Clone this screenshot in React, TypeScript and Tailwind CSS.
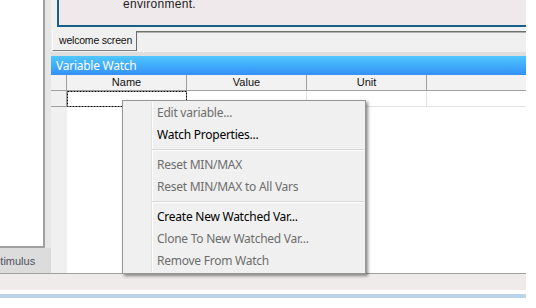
import React from "react";

const MenuItem = ({ label, disabled }: { label: string; disabled?: boolean }) => (
  <div
    className={`h-[22px] flex items-center pl-[34px] text-[12px] leading-none tracking-[-0.25px] ${
      disabled ? "text-[#6d6d6d]" : "text-[#000000]"
    }`}
  >
    {label}
  </div>
);

const Separator = () => (
  <div className="h-[8px] flex flex-col justify-center pl-[29px] pr-[1px]">
    <div className="h-[1px] bg-[#d7d7d7]" />
    <div className="h-[1px] bg-white" />
  </div>
);

export default function App() {
  return (
    <div className="w-[536px] h-[308px] bg-white relative overflow-hidden font-['Noto_Sans',sans-serif]">
      <div className="w-[526px] flex flex-col">
        <div className="flex h-[273px]">
          {/* left panel */}
          <div className="w-[51px] flex flex-col bg-[#e6e6e6]">
            <div className="h-[248px] w-[45px] bg-white border-r-2 border-b-2 border-[#a0a0a0]" />
            <div className="flex-1 bg-[#dcdcdc] overflow-hidden">
              <div className="ml-[-7px] mt-[6px] text-[11px] leading-[14px] text-[#50505e] font-['Liberation_Sans',sans-serif] whitespace-nowrap">
                Stimulus
              </div>
            </div>
          </div>
          {/* right area */}
          <div className="flex-1 flex flex-col bg-[#f0f0f0]">
            <div className="h-[27px] pl-[6px]">
              <div className="h-[27px] bg-[#efe9ec] border-l-2 border-b-2 border-[#17608c] overflow-hidden">
                <div className="pl-[64px] mt-[-2px] text-[12px] leading-[12px] text-[#1e1e1e] font-['Liberation_Sans',sans-serif] tracking-[0.3px]">
                  environment.
                </div>
              </div>
            </div>
            <div className="h-[4px]" />
            {/* tab strip */}
            <div className="h-[21px] flex">
              <div className="w-[1px]" />
              <div className="w-[85px] h-[20px] border-l border-white border-r border-b border-r-[#696969] border-b-[#808080] flex items-center pl-[6px] text-[10.5px] tracking-[-0.2px] text-[#111] font-['Liberation_Sans',sans-serif] whitespace-nowrap">
                welcome screen
              </div>
              <div className="flex-1 flex flex-col">
                <div className="h-[1px] bg-[#707070]" />
                <div className="h-[1px] bg-[#b0b0b0]" />
              </div>
            </div>
            <div className="h-[4px] bg-[#dedede]" />
            {/* Variable Watch */}
            <div className="h-[19px] bg-linear-to-b from-[#50c7ff] to-[#3590f5] flex items-center pl-[5px] text-white text-[12px] leading-none tracking-[-0.25px]">
              Variable Watch
            </div>
            {/* grid */}
            <div className="flex-1 flex flex-col bg-white font-['Liberation_Sans',sans-serif] text-[11px]">
              <div className="h-[16px] flex border-b border-[#a0a0a0] bg-[#f2f2f2] text-[#111]">
                <div className="w-[16px] border-r border-[#a0a0a0]" />
                <div className="w-[120px] border-r border-[#a0a0a0] flex items-center justify-center">Name</div>
                <div className="w-[120px] border-r border-[#a0a0a0] flex items-center justify-center">Value</div>
                <div className="w-[120px] border-r border-[#a0a0a0] flex items-center justify-center">Unit</div>
                <div className="flex-1" />
              </div>
              <div className="h-[16px] flex">
                <div className="w-[16px] bg-[#f0f0f0] border-r border-b border-[#a0a0a0]" />
                <div className="w-[120px] relative border-b border-r border-[#e2e2e2]">
                  <svg className="absolute left-0 top-0" width="120" height="16">
                    <rect x="0.5" y="0.5" width="119" height="15" fill="none" stroke="#000" strokeWidth="1" strokeDasharray="2 1" />
                  </svg>
                </div>
                <div className="w-[120px] border-b border-r border-[#e2e2e2]" />
                <div className="w-[120px] border-b border-r border-[#e2e2e2]" />
                <div className="flex-1 border-b border-[#e2e2e2]" />
              </div>
              <div className="flex-1 flex">
                <div className="w-[16px] bg-[#f0f0f0]" />
                <div className="flex-1 bg-white" />
              </div>
            </div>
          </div>
        </div>
        <div className="h-[1px] bg-[#a0a0a0]" />
        <div className="h-[16px] bg-[#efebeb]" />
        <div className="h-[4px] bg-white" />
        <div className="h-[4px] bg-[#bcd3ec]" />
      </div>

      {/* context menu */}
      <div className="absolute left-[122px] top-[100px] w-[244px] h-[174px] bg-[#f0f0f0] border border-[#979797] py-[1px] shadow-[2px_2px_3px_rgba(0,0,0,0.45)]">
        <div className="absolute left-[28px] top-[1px] bottom-[1px] w-[1px] bg-[#e2e3e3]" />
        <div className="absolute left-[29px] top-[1px] bottom-[1px] w-[1px] bg-white" />
        <div className="relative">
          <MenuItem label="Edit variable..." disabled />
          <MenuItem label="Watch Properties..." />
          <Separator />
          <MenuItem label="Reset MIN/MAX" disabled />
          <MenuItem label="Reset MIN/MAX to All Vars" disabled />
          <Separator />
          <MenuItem label="Create New Watched Var..." />
          <MenuItem label="Clone To New Watched Var..." disabled />
          <MenuItem label="Remove From Watch" disabled />
        </div>
      </div>
    </div>
  );
}
